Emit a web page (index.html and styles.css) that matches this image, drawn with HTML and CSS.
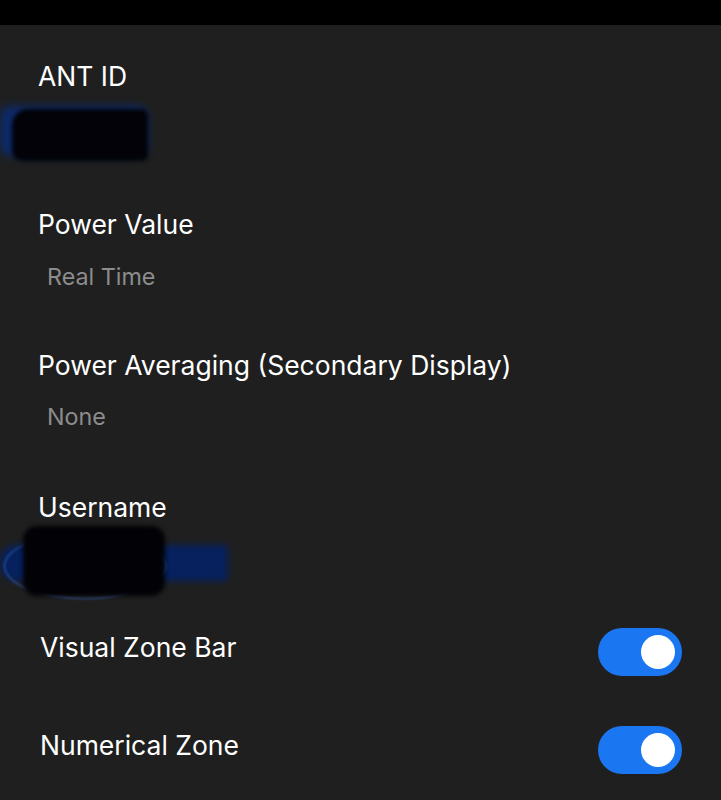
FILE: index.html
```html
<!DOCTYPE html>
<html>
<head>
<meta charset="utf-8">
<link rel="stylesheet" href="styles.css">
</head>
<body>
<div class="statusbar"></div>
<main class="settings">
  <section class="item">
    <div class="label">ANT ID</div>
    <div class="redact redact-ant"><div class="blue"></div><div class="black"></div></div>
  </section>
  <section class="item">
    <div class="label">Power Value</div>
    <div class="value">Real Time</div>
  </section>
  <section class="item">
    <div class="label">Power Averaging (Secondary Display)</div>
    <div class="value">None</div>
  </section>
  <section class="item">
    <div class="label">Username</div>
    <div class="redact redact-user"><div class="blue"></div><div class="ring"></div><div class="black"></div></div>
  </section>
  <section class="toggle-row first">
    <div class="label">Visual Zone Bar</div>
    <div class="switch"><span class="knob"></span></div>
  </section>
  <section class="toggle-row second">
    <div class="label">Numerical Zone</div>
    <div class="switch"><span class="knob"></span></div>
  </section>
</main>
</body>
</html>
```
FILE: styles.css
```css
html, body {
  margin: 0;
  padding: 0;
  background: #1f1f1f;
  font-family: Inter, "Open Sans", "Liberation Sans", sans-serif;
  overflow: hidden;
}
.statusbar {
  height: 25px;
  background: #000;
}
.settings {
  display: flex;
  flex-direction: column;
  padding-left: 38px;
  padding-right: 39px;
}
.label {
  color: #ffffff;
  font-size: 26.5px;
  line-height: 32px;
}
.value {
  color: #8c8c8c;
  font-size: 23.3px;
  line-height: 30px;
  padding-left: 9px;
}
.item {
  display: flex;
  flex-direction: column;
  box-sizing: border-box;
}
.item:nth-child(1) { padding-top: 35px; height: 139px; }
.item:nth-child(2) { height: 142px; padding-top: 44px; }
.item:nth-child(2) .value { margin-top: 22px; }
.item:nth-child(3) { height: 142px; padding-top: 43px; }
.item:nth-child(3) .value { margin-top: 21px; }
.item:nth-child(4) { height: 164px; padding-top: 43px; }

.redact {
  position: relative;
  margin-left: -38px;
}
.redact > div { position: absolute; }
.redact-ant { height: 60px; margin-top: 12px; }
.redact-ant .blue {
  left: 0; top: 2px; width: 148px; height: 50px;
  background: #0c2a6a;
  border-radius: 10px;
  filter: blur(4px);
}
.redact-ant .black {
  left: 12px; top: 5px; width: 136px; height: 52px;
  background: #020208;
  border-radius: 16px 6px 6px 10px;
  filter: blur(2px);
}
.redact-user { height: 80px; margin-top: 0; }
.redact-user .ring {
  left: 4px; top: 10px; width: 160px; height: 64px;
  border: 1.5px solid #3a63b8;
  border-radius: 50%;
  filter: blur(1px);
}
.redact-user .blue {
  left: 0; top: 22px; width: 228px; height: 36px;
  background: #06215e;
  border-radius: 16px 4px 4px 16px;
  filter: blur(3px);
}
.redact-user .black {
  left: 23px; top: 3px; width: 142px; height: 70px;
  background: #020206;
  border-radius: 14px;
  filter: blur(2px);
}

.toggle-row {
  display: flex;
  align-items: center;
  justify-content: space-between;
  padding-left: 2px;
}
.toggle-row.first { height: 92px; margin-top: -11px; }
.toggle-row.second { height: 104px; }
.switch {
  width: 84px;
  height: 48px;
  margin-top: 10px;
  border-radius: 24px;
  background: #1b76f2;
  display: flex;
  align-items: center;
  justify-content: flex-end;
  padding: 0 7px;
  box-sizing: border-box;
}
.knob {
  width: 34px;
  height: 34px;
  border-radius: 50%;
  background: #fff;
}
```
